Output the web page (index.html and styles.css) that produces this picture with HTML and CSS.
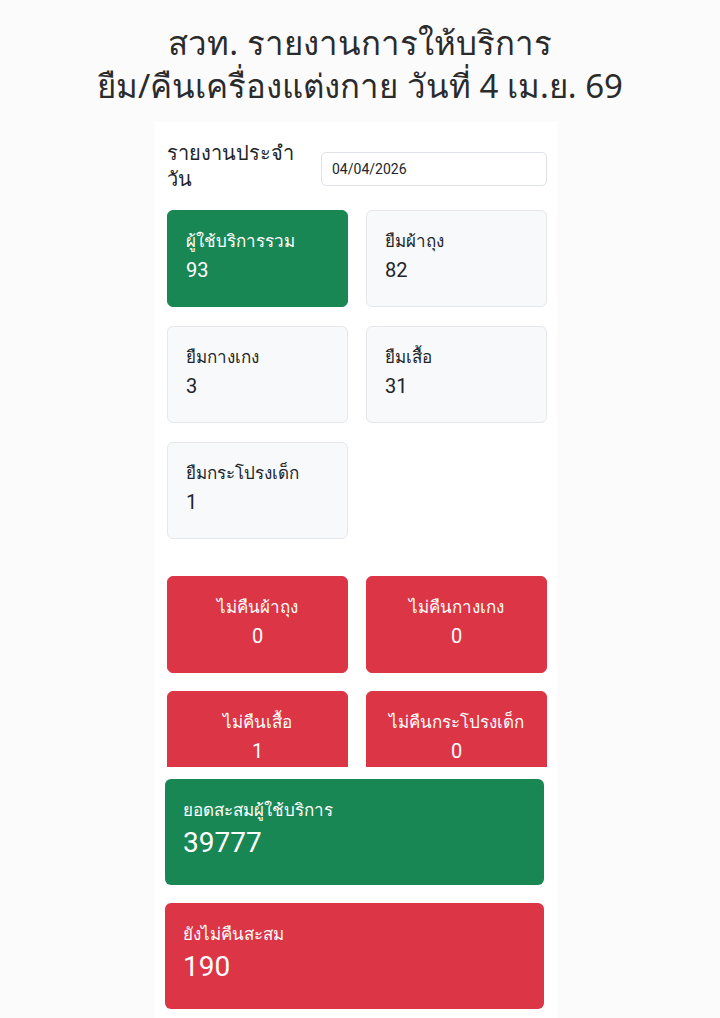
FILE: index.html
```html
<!DOCTYPE html>
<html lang="th">
<head>
    <meta charset="UTF-8">
    <meta name="viewport" content="width=device-width, initial-scale=1.0">
    <title>สวท. รายงานการให้บริการ</title>
    <link rel="stylesheet" href="styles.css">
</head>
<body>
    <h1 class="title">สวท. รายงานการให้บริการ<br>ยืม/คืนเครื่องแต่งกาย วันที่ 4 เม.ย. 69</h1>

    <div class="panel">
        <div class="daily">
            <div class="date-row">
                <label for="reportDate">รายงานประจำวัน</label>
                <input type="text" id="reportDate" value="04/04/2026">
            </div>

            <div class="grid">
                <div class="stat stat-green"><span>ผู้ใช้บริการรวม</span><b>93</b></div>
                <div class="stat"><span>ยืมผ้าถุง</span><b>82</b></div>
                <div class="stat"><span>ยืมกางเกง</span><b>3</b></div>
                <div class="stat"><span>ยืมเสื้อ</span><b>31</b></div>
                <div class="stat"><span>ยืมกระโปรงเด็ก</span><b>1</b></div>
            </div>

            <div class="grid grid-red">
                <div class="stat stat-red"><span>ไม่คืนผ้าถุง</span><b>0</b></div>
                <div class="stat stat-red"><span>ไม่คืนกางเกง</span><b>0</b></div>
                <div class="stat stat-red"><span>ไม่คืนเสื้อ</span><b>1</b></div>
                <div class="stat stat-red"><span>ไม่คืนกระโปรงเด็ก</span><b>0</b></div>
            </div>
        </div>

        <div class="total total-green">
            <span>ยอดสะสมผู้ใช้บริการ</span>
            <b>39777</b>
        </div>
        <div class="total total-red">
            <span>ยังไม่คืนสะสม</span>
            <b>190</b>
        </div>
    </div>
</body>
</html>
```

FILE: styles.css
```css
body { margin: 0; background: #fbfbfb; color: #212529; font-family: Roboto, "Noto Sans", sans-serif; }
.title { margin: 0; padding: 21px 0 15px; text-align: center; font-family: "Noto Sans", sans-serif; font-size: 33px; font-weight: normal; line-height: 43px; color: #2b2b2b; }

.panel { width: 402px; margin-left: calc(50% - 205px); background: #fff; min-height: 900px; }
.daily { height: 645px; overflow: hidden; padding: 0 10px 0 12px; box-sizing: border-box; }

.date-row { display: grid; grid-template-columns: 140px 226px; column-gap: 14px; align-items: center; padding: 18px 0 18px; }
.date-row label { font-size: 20px; line-height: 26px; }
.date-row input { margin-top: 6px; height: 34px; box-sizing: border-box; padding: 0 10px; border: 1px solid #dee2e6; border-radius: 5px; font-family: Roboto, sans-serif; font-size: 14px; color: #212529; }

.grid { display: grid; grid-template-columns: 181px 181px; column-gap: 18px; row-gap: 19px; }
.grid-red { margin-top: 37px; row-gap: 18px; }

.stat { height: 97px; box-sizing: border-box; padding: 17px 18px; background: #f8f9fa; border: 1px solid #e5e7ea; border-radius: 6px; display: flex; flex-direction: column; }
.stat span { font-size: 17px; line-height: 26px; }
.stat b { font-size: 20px; font-weight: normal; line-height: 33px; }
.stat-green { background: #198754; border-color: #198754; color: #fff; }
.stat-red { background: #dc3545; border-color: #dc3545; color: #fff; align-items: center; }

.total { margin: 12px 13px 18px 10px; height: 106px; box-sizing: border-box; padding: 19px 18px; border-radius: 6px; color: #fff; display: flex; flex-direction: column; }
.total span { font-size: 17px; line-height: 24px; }
.total b { font-size: 28px; font-weight: normal; line-height: 42px; }
.total-green { background: #198754; }
.total-red { background: #dc3545; }
```
